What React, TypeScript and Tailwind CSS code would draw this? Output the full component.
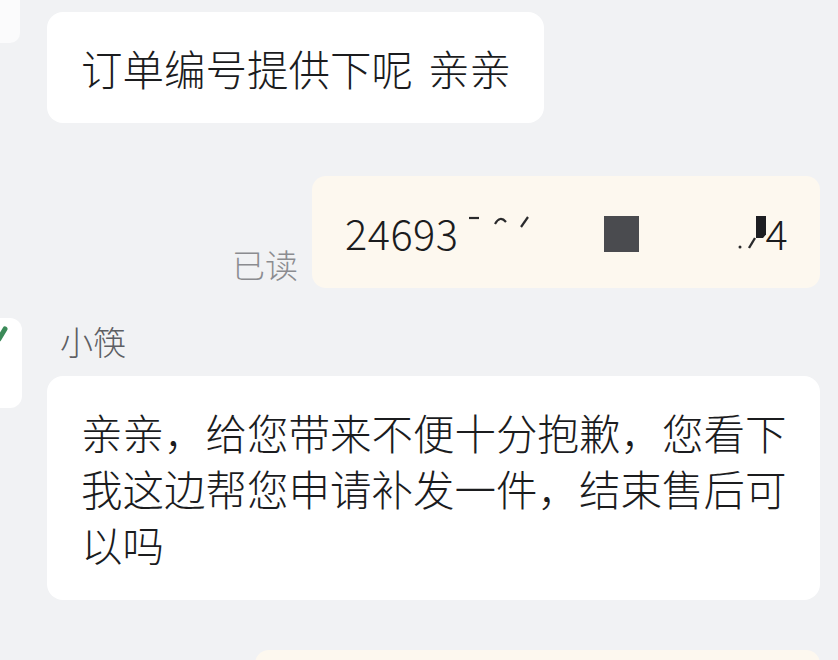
import React from "react";

export default function App() {
  const font = { fontFamily: '"Noto Sans CJK SC", "Noto Sans", sans-serif' };
  return (
    <div
      className="w-[838px] h-[660px] overflow-hidden bg-[#f1f2f4] pt-[12px] flex flex-col text-[#1b1c1e] font-light"
      style={font}
    >
      {/* Row 1 */}
      <div className="flex items-start">
        <div className="w-[20px] h-[43px] -mt-[12px] bg-[#fbfbfc] rounded-br-[10px] shrink-0" />
        <div className="ml-[27px] bg-white rounded-[16px] pl-[34px] pr-[33px] py-[27.5px] text-[41.5px] leading-[56px] whitespace-nowrap flex">
          <span>订单编号提供下呢</span>
          <span className="ml-[15px]">亲亲</span>
        </div>
      </div>

      {/* Row 2 */}
      <div className="flex justify-end items-end pr-[18px] mt-[53px]">
        <div className="text-[33px] leading-[40px] text-[#8b8c90] mr-[14px] mb-[4px]">已读</div>
        <div className="bg-[#fdf8ef] rounded-[14px] pl-[33px] pr-[35px] py-[28px]">
          <div className="w-[440px] h-[56px] flex items-start text-[41.5px] leading-[56px]">
            <span className="tracking-[0.5px]">24693</span>
            <svg width="80" height="56" className="shrink-0">
              <line x1="10" y1="14" x2="20" y2="14" stroke="#2a2a2c" strokeWidth="2.2" />
              <path d="M36 20 Q41 11 47 18" stroke="#2a2a2c" strokeWidth="2.2" fill="none" />
              <line x1="62" y1="23" x2="69" y2="13" stroke="#2a2a2c" strokeWidth="2.2" />
            </svg>
            <div className="ml-[65px] mt-[12px] w-[35px] h-[36px] bg-[#4a4b4f] shrink-0" />
            <svg width="29" height="56" className="ml-[98px] shrink-0">
              <circle cx="3" cy="43" r="1.5" fill="#2a2a2c" />
              <line x1="12" y1="44" x2="18" y2="34" stroke="#2a2a2c" strokeWidth="2.4" />
              <polygon points="19,12 33,12 33,26 26,34 19,34" fill="#1d1e22" />
            </svg>
            <span>4</span>
          </div>
        </div>
      </div>

      {/* Row 3 */}
      <div className="flex items-start mt-[30px]">
        <div className="relative w-[22px] h-[90px] bg-white rounded-r-[12px] overflow-hidden shrink-0">
          <svg width="22" height="90" className="absolute left-0 top-0">
            <line x1="-1" y1="21" x2="5" y2="11" stroke="#3b8a58" strokeWidth="5" strokeLinecap="round" />
          </svg>
        </div>
        <div className="ml-[25px] flex flex-col">
          <div className="ml-[13px] mt-[3px] text-[33px] leading-[40px] text-[#5d5e63]">小筷</div>
          <div className="mt-[15px] w-[773px] bg-white rounded-[16px] pl-[34px] pr-[32px] py-[28px] text-[41.5px] leading-[56px]">
            亲亲，给您带来不便十分抱歉，您看下我这边帮您申请补发一件，结束售后可以吗
          </div>
        </div>
      </div>

      {/* Row 4 */}
      <div className="flex justify-end pr-[18px] mt-[50px]">
        <div className="w-[565px] h-[100px] bg-[#fdf8ef] rounded-[14px] shrink-0" />
      </div>
    </div>
  );
}
